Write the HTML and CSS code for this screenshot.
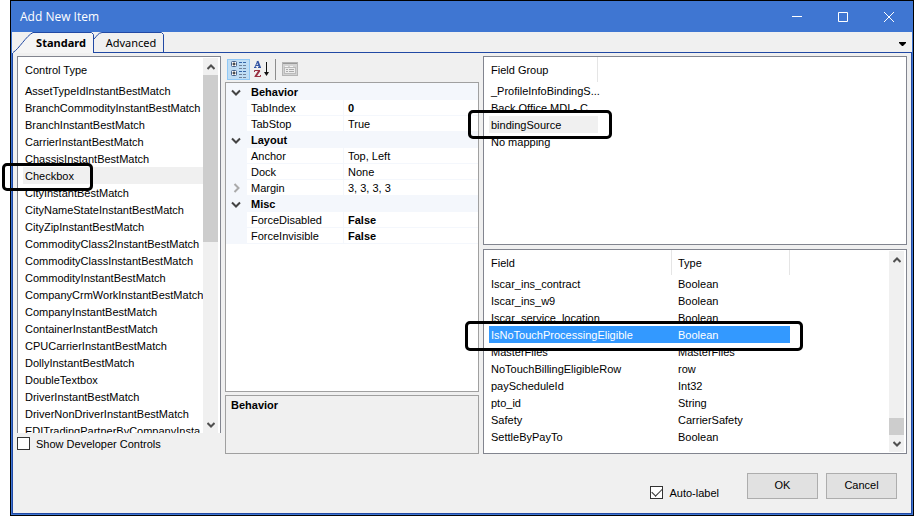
FILE: index.html
```html
<!DOCTYPE html>
<html lang="en">
<head>
<meta charset="utf-8">
<title>Add New Item</title>
<link rel="stylesheet" href="styles.css">
</head>
<body>
<main class="dialog">
  <header class="titlebar">
    <h1>Add New Item</h1>
    <button class="winbtn" type="button" aria-label="Minimize"><svg width="12" height="12" viewBox="0 0 12 12"><path d="M1 5.500H11"/></svg></button>
    <button class="winbtn" type="button" aria-label="Maximize"><svg width="12" height="12" viewBox="0 0 12 12"><path d="M1.500 1.500H10.500V10.500H1.500Z"/></svg></button>
    <button class="winbtn" type="button" aria-label="Close"><svg width="12" height="12" viewBox="0 0 12 12"><path d="M1 1L11 11M11 1L1 11"/></svg></button>
  </header>
  <nav class="tabs">
    <button class="tab tab-active" type="button"><svg width="82" height="21" viewBox="0 0 82 21"><path class="fill" d="M0 21C6 18 13 4 20 .5H78.500L80.500 2.500V21Z"/><path d="M0 20.500C6 17 13 4 20 .5H78.500L80.500 2.500V21"/></svg><span>Standard</span></button>
    <button class="tab" type="button"><svg width="71" height="21" viewBox="0 0 71 21"><path d="M0 7C3 4 4 1 8 .5H67.500L69.500 2.500V20.500M0 20.500H71"/></svg><span>Advanced</span></button>
    <div class="tabline"><button class="tabmenu" type="button" aria-label="Tab list"><svg width="7" height="4" viewBox="0 0 7 4"><path d="M0 0H7V1L4 4H3L0 1Z"/></svg></button></div>
  </nav>
  <div class="page">
    <div class="columns">
      <section class="col-left">
        <div class="listbox listbox-open">
          <div class="rows">
            <table>
              <thead><tr><th>Control Type</th></tr></thead>
              <tbody>
                <tr><td>AssetTypeIdInstantBestMatch</td></tr>
                <tr><td>BranchCommodityInstantBestMatch</td></tr>
                <tr><td>BranchInstantBestMatch</td></tr>
                <tr><td>CarrierInstantBestMatch</td></tr>
                <tr><td>ChassisInstantBestMatch</td></tr>
                <tr class="soft"><td>Checkbox</td></tr>
                <tr><td>CityInstantBestMatch</td></tr>
                <tr><td>CityNameStateInstantBestMatch</td></tr>
                <tr><td>CityZipInstantBestMatch</td></tr>
                <tr><td>CommodityClass2InstantBestMatch</td></tr>
                <tr><td>CommodityClassInstantBestMatch</td></tr>
                <tr><td>CommodityInstantBestMatch</td></tr>
                <tr><td>CompanyCrmWorkInstantBestMatch</td></tr>
                <tr><td>CompanyInstantBestMatch</td></tr>
                <tr><td>ContainerInstantBestMatch</td></tr>
                <tr><td>CPUCarrierInstantBestMatch</td></tr>
                <tr><td>DollyInstantBestMatch</td></tr>
                <tr><td>DoubleTextbox</td></tr>
                <tr><td>DriverInstantBestMatch</td></tr>
                <tr><td>DriverNonDriverInstantBestMatch</td></tr>
                <tr><td>EDITradingPartnerByCompanyInsta</td></tr>
              </tbody>
            </table>
          </div>
          <div class="scrollbar">
            <svg class="arrow" width="8" height="6" viewBox="0 0 8 6"><path d="M.5 5L4 1.500L7.500 5"/></svg>
            <div class="track"><div class="thumb thumb-long"></div></div>
            <svg class="arrow" width="8" height="6" viewBox="0 0 8 6"><path d="M.5 1L4 4.500L7.500 1"/></svg>
          </div>
        </div>
        <label class="check"><input type="checkbox"> Show Developer Controls</label>
        <div class="callout callout-control"></div>
      </section>

      <section class="col-mid">
        <div class="toolbar">
          <button class="tool tool-on" type="button" aria-label="Categorized">
            <svg width="18" height="18" viewBox="0 0 18 18">
              <rect x="1.500" y="1.500" width="5" height="5" rx="1" fill="#fff" stroke="#44618c"/><path d="M2.500 4H5.500M4 2.500V5.500" stroke="#111"/>
              <rect x="1.500" y="10.500" width="5" height="5" rx="1" fill="#fff" stroke="#44618c"/><path d="M2.500 13H5.500M4 11.500V14.500" stroke="#111"/>
              <path d="M9 2.500H12M13 2.500H16M9 11.500H12M13 11.500H16" stroke="#3566a8"/><path d="M9 5.500H12M13 5.500H16M9 8.500H12M13 8.500H16M9 14.500H12M13 14.500H16M9 17.500H12M13 17.500H16" stroke="#718299"/>
            </svg>
          </button>
          <button class="tool" type="button" aria-label="Alphabetical">
            <svg width="18" height="18" viewBox="0 0 18 18"><path d="M1 7.500H3.500M5 7.500H8M2 7L4.500 1.500M3 5.500H6" stroke="#3455a4"/><path d="M4.500 1L7 7.500" stroke="#3455a4" stroke-width="2"/><path d="M1.500 12V10.500H7M1.500 16.500H7.500V15" stroke="#9a3040"/><path d="M6.500 10.500L2.500 16.500" stroke="#9a3040" stroke-width="2"/><path d="M13.500 2V13" stroke="#111"/><path d="M11 12H16L13.500 16Z" fill="#111"/></svg>
          </button>
          <span class="divider"></span>
          <button class="tool" type="button" aria-label="Property Pages">
            <svg width="18" height="18" viewBox="0 0 18 18"><rect x="1.500" y="2.500" width="15" height="13" fill="#d2d2d2" stroke="#b4b4b4"/><path d="M2 3.500H16" stroke="#999"/><rect x="3.500" y="7.500" width="11" height="6" fill="#ececec" stroke="#bbb"/><path d="M4 6.500H7M9 6.500H12" stroke="#f5f5f5"/><path d="M5 9.500H7M8 9.500H13M5 11.500H7M8 11.500H13" stroke="#aaa"/></svg>
          </button>
        </div>
        <div class="props">
          <table>
            <colgroup><col class="c-gut"><col class="c-name"><col></colgroup>
            <tbody>
              <tr class="cat"><td class="gut"><svg width="10" height="7" viewBox="0 0 10 7"><path d="M1 1.500L5 5.500L9 1.500"/></svg></td><th colspan="2">Behavior</th></tr>
              <tr><td class="gut"></td><td>TabIndex</td><td><b>0</b></td></tr>
              <tr><td class="gut"></td><td>TabStop</td><td>True</td></tr>
              <tr class="cat"><td class="gut"><svg width="10" height="7" viewBox="0 0 10 7"><path d="M1 1.500L5 5.500L9 1.500"/></svg></td><th colspan="2">Layout</th></tr>
              <tr><td class="gut"></td><td>Anchor</td><td>Top, Left</td></tr>
              <tr><td class="gut"></td><td>Dock</td><td>None</td></tr>
              <tr><td class="gut closed"><svg width="7" height="10" viewBox="0 0 7 10"><path d="M1.500 1L5.500 5L1.500 9"/></svg></td><td>Margin</td><td>3, 3, 3, 3</td></tr>
              <tr class="cat"><td class="gut"><svg width="10" height="7" viewBox="0 0 10 7"><path d="M1 1.500L5 5.500L9 1.500"/></svg></td><th colspan="2">Misc</th></tr>
              <tr><td class="gut"></td><td>ForceDisabled</td><td><b>False</b></td></tr>
              <tr><td class="gut"></td><td>ForceInvisible</td><td><b>False</b></td></tr>
            </tbody>
          </table>
        </div>
        <div class="help">Behavior</div>
      </section>

      <section class="col-right">
        <div class="listbox groups">
          <div class="rows">
            <table class="group-table">
              <thead><tr><th>Field Group</th></tr></thead>
              <tbody>
                <tr><td>_ProfileInfoBindingS...</td></tr>
                <tr><td>Back Office MDI - C</td></tr>
                <tr class="soft"><td>bindingSource</td></tr>
                <tr><td>No mapping</td></tr>
              </tbody>
            </table>
          </div>
        </div>
        <div class="listbox fields">
          <div class="rows">
            <table class="field-table">
              <thead><tr><th>Field</th><th>Type</th></tr></thead>
              <tbody>
                <tr><td>Iscar_ins_contract</td><td>Boolean</td></tr>
                <tr><td>Iscar_ins_w9</td><td>Boolean</td></tr>
                <tr><td>Iscar_service_location</td><td>Boolean</td></tr>
                <tr class="selected"><td>IsNoTouchProcessingEligible</td><td>Boolean</td></tr>
                <tr><td>MasterFiles</td><td>MasterFiles</td></tr>
                <tr><td>NoTouchBillingEligibleRow</td><td>row</td></tr>
                <tr><td>payScheduleId</td><td>Int32</td></tr>
                <tr><td>pto_id</td><td>String</td></tr>
                <tr><td>Safety</td><td>CarrierSafety</td></tr>
                <tr><td>SettleByPayTo</td><td>Boolean</td></tr>
              </tbody>
            </table>
          </div>
          <div class="scrollbar">
            <svg class="arrow" width="8" height="6" viewBox="0 0 8 6"><path d="M.5 5L4 1.500L7.500 5"/></svg>
            <div class="track track-end"><div class="thumb"></div></div>
            <svg class="arrow" width="8" height="6" viewBox="0 0 8 6"><path d="M.5 1L4 4.500L7.500 1"/></svg>
          </div>
        </div>
        <div class="callout callout-group"></div>
        <div class="callout callout-field"></div>
      </section>
    </div>
    <footer class="footer">
      <label class="check"><input type="checkbox" checked> Auto-label</label>
      <button class="btn" type="button">OK</button>
      <button class="btn" type="button">Cancel</button>
    </footer>
  </div>
</main>
</body>
</html>
```
FILE: styles.css
```css
* { box-sizing: border-box; }

body {
  margin: 0;
  padding-left: 10px;
  background: #fff;
  color: #000;
  font: 11px/16px "Liberation Sans", Arial, sans-serif;
}

button {
  margin: 0;
  padding: 0;
  border: 0;
  background: none;
  color: inherit;
  font: inherit;
}

svg { display: block; fill: none; }

table {
  border-collapse: separate;
  border-spacing: 0;
  table-layout: fixed;
}

th, td {
  padding: 0;
  text-align: left;
  white-space: nowrap;
}

.dialog {
  display: flex;
  flex-direction: column;
  height: 100vh;
  min-height: 420px;
  border: 1px solid #000;
  background: #f0f0f0;
}

.titlebar {
  display: flex;
  flex: none;
  height: 31px;
  background: #3f76d2;
  color: #fff;
}

.titlebar h1 {
  flex: 1;
  margin: 0;
  padding-left: 9px;
  font: 12px/31px "Open Sans", "Noto Sans", sans-serif;
}

.winbtn {
  display: grid;
  place-items: center;
  width: 46px;
}

.winbtn:last-child { margin-right: 1px; }
.winbtn path { stroke: #fff; }

.tabs {
  display: flex;
  flex: none;
  height: 21px;
  padding-left: 1px;
  border: solid #3f76d2;
  border-width: 0 1px;
  font: 11px/21px "Noto Sans", "Open Sans", sans-serif;
}

.tab {
  position: relative;
  width: 71px;
  padding-left: 3px;
}

.tab-active {
  width: 81px;
  padding-left: 15px;
  font-weight: 700;
}

.tab svg {
  position: absolute;
  top: 0;
  left: 0;
}

.tab path { stroke: #2149a4; }
.tab .fill { fill: #f5f5f5; stroke: none; }
.tab span { position: relative; }

.tabline {
  display: flex;
  flex: 1;
  justify-content: flex-end;
  align-items: flex-end;
  padding: 0 6px 6px 0;
  border-bottom: 1px solid #2149a4;
}

.tabmenu path { fill: #000; }

.page {
  display: flex;
  flex: 1;
  flex-direction: column;
  min-height: 0;
  border: solid #3f76d2;
  border-width: 0 1px 1px;
  box-shadow: inset 1px -1px #2149a4, inset -1px 0 #2149a4;
  padding: 3px 5px 1px;
}

.columns {
  display: grid;
  flex: 1;
  grid-template-columns: 204px 254px minmax(0, 1fr);
  grid-template-rows: minmax(0, 1fr);
  column-gap: 4px;
  min-height: 0;
}

.col-left, .col-mid, .col-right {
  position: relative;
  display: flex;
  flex-direction: column;
  min-height: 0;
}

.listbox {
  display: flex;
  min-height: 0;
  overflow: hidden;
  border: 1px solid #82858f;
  background: #fff;
}

.listbox-open {
  flex: 1;
  border-bottom: 0;
}

.rows {
  flex: 1;
  min-width: 0;
  overflow: hidden;
  padding-left: 5px;
}

.rows table { width: 180px; }
.rows td { height: 17px; padding-left: 2px; }
.rows th { height: 25px; padding-left: 2px; font-weight: 400; }

.soft td { background: #f0f0f0; }
.selected td { background: #3399ff; color: #fff; }

.rows .group-table { width: 109px; }
.rows .field-table { width: 301px; }
.field-table th:first-child { width: 183px; }
.field-table th + th, .field-table td + td { padding-left: 6px; }
.group-table th, .field-table th { border-right: 1px solid #e5e5e5; }

.scrollbar {
  display: flex;
  flex: none;
  flex-direction: column;
  align-items: center;
  width: 15px;
  margin: 1px 2px 1px 0;
  background: #f0f0f0;
}

.listbox-open .scrollbar { margin-bottom: 0; }

.arrow {
  flex: none;
  margin: 6px 0 5px;
  stroke: #505050;
  stroke-width: 2;
}

.track {
  display: flex;
  flex: 1;
  flex-direction: column;
  width: 100%;
}

.track-end { justify-content: flex-end; }

.thumb {
  height: 17px;
  background: #cdcdcd;
}

.thumb-long { height: 49%; }

.check {
  display: flex;
  align-items: center;
  gap: 6px;
  height: 21px;
}

.check input {
  display: grid;
  place-items: center;
  appearance: none;
  width: 13px;
  height: 13px;
  margin: 0;
  border: 1px solid #333;
  background: #fff;
}

.check input:checked::after {
  content: "";
  width: 9px;
  height: 5px;
  margin-bottom: 3px;
  border: solid #333;
  border-width: 0 0 1px 1px;
  transform: rotate(-45deg);
}

.toolbar {
  display: flex;
  flex: none;
  align-items: center;
  height: 26px;
  padding: 0 2px;
}

.tool {
  display: grid;
  place-items: center;
  width: 23px;
  height: 21px;
}

.tool-on {
  border: 1px solid #90c8f6;
  background: #bfddf5;
}

.divider {
  width: 1px;
  height: 21px;
  margin: 0 2px;
  background: #8d8d8d;
}

.props {
  flex: 1;
  min-height: 0;
  overflow: hidden;
  border: 1px solid #a0a0a0;
  background: #fff;
}

.props table { width: 100%; }
.c-gut { width: 21px; }
.c-name { width: 96px; }

.props td, .props th {
  height: 16px;
  padding: 1px 0 0 4px;
  border-bottom: 1px solid #f4f7fc;
  line-height: 14px;
}

.props tr:first-child > * { height: 17px; padding-top: 2px; }
.props td + td + td { border-left: 1px solid #f4f7fc; }

.props .gut {
  padding-left: 5px;
  background: #f4f7fc;
}

.gut path { stroke: #444; stroke-width: 2; }
.closed path { stroke: #aaa; }
.closed svg { margin-left: 2px; }
.cat th { background: #f4f7fc; }
.props .cat th, .help, .props b { font-weight: 700; }

.help {
  flex: none;
  height: 59px;
  margin-top: 3px;
  padding: 1px 5px;
  border: 1px solid #a0a0a0;
}

.col-right { gap: 4px; }
.groups { flex: 189 1 0; }
.fields { flex: 205 1 0; }

.footer {
  display: flex;
  flex: none;
  align-items: flex-end;
  justify-content: flex-end;
  gap: 8px;
  height: 59px;
  padding: 0 10px 14px 0;
}

.footer .check {
  gap: 6px;
  height: 13px;
  margin-right: 20px;
}

.btn {
  width: 71px;
  height: 26px;
  padding-bottom: 2px;
  border: 1px solid #adadad;
  background: #e1e1e1;
}

.callout {
  position: absolute;
  border: 3px solid #000;
  border-radius: 5px;
  pointer-events: none;
}

.callout-control { top: 107px; left: -15px; width: 91px; height: 28px; }
.callout-group { top: 54px; left: -15px; width: 144px; height: 29px; }
.callout-field { top: 265px; left: -18px; width: 338px; height: 30px; }
```
